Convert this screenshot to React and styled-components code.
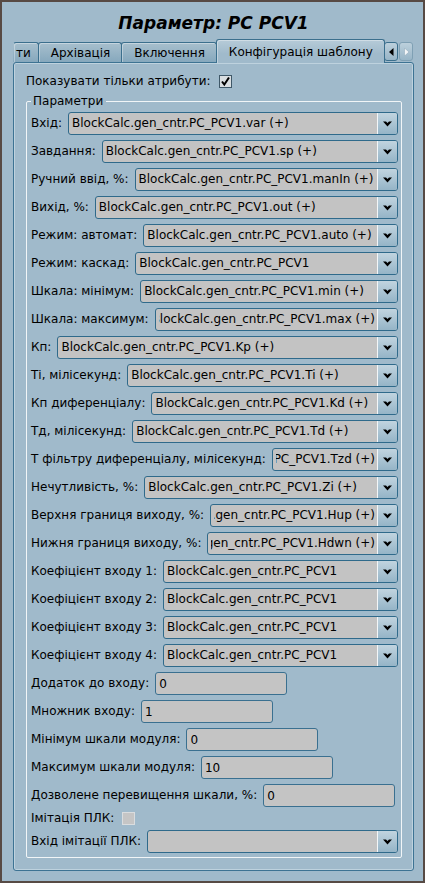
import React from "react";
import styled, { createGlobalStyle } from "styled-components";

const GlobalStyle = createGlobalStyle`
  html, body { margin: 0; padding: 0; background: #574a44; }
  * { box-sizing: border-box; }
`;

const BG = "#a0bacb";

const Window = styled.div`
  width: 425px;
  height: 883px;
  border: 2px solid #574a44;
  background: ${BG};
  display: flex;
  flex-direction: column;
  padding: 0 9px 10px 11px;
  font-family: "DejaVu Sans", "Noto Sans", sans-serif;
  font-size: 12px;
  color: #000;
`;

const Title = styled.h1`
  margin: 0;
  height: 37px;
  padding-top: 11px;
  text-align: center;
  font-size: 17px;
  line-height: 20px;
  font-weight: bold;
  font-style: italic;
`;

const TabBar = styled.div`
  height: 23px;
  display: flex;
  align-items: flex-end;
`;

const Tabs = styled.div`
  display: flex;
  align-items: flex-end;
  flex: 1;
  min-width: 0;
`;

const Tab = styled.div`
  position: relative;
  height: ${(p) => (p.$active ? "24px" : "20px")};
  margin-bottom: ${(p) => (p.$active ? "-1px" : "0")};
  margin-left: ${(p) => (p.$first ? "0" : "-1px")};
  z-index: ${(p) => (p.$active ? 2 : 1)};
  padding: ${(p) => (p.$first ? "0 7px 0 2px" : "0 11px 0 12px")};
  display: flex;
  align-items: center;
  white-space: nowrap;
  border: 1px solid #3b6f8d;
  border-left-color: ${(p) => (p.$first ? "transparent" : "#3b6f8d")};
  border-bottom: none;
  border-radius: 3px 3px 0 0;
  background: ${(p) =>
    p.$active
      ? `linear-gradient(#b6cbd8, ${BG} 60%)`
      : "linear-gradient(#a7bfcd, #86a8bd)"};
  box-shadow: inset 1px 1px 0 rgba(255, 255, 255, 0.35);
`;

const ScrollButtons = styled.div`
  display: flex;
  gap: 1px;
  height: 20px;
  flex-shrink: 0;
  margin-right: 1px;
`;

const ScrollBtn = styled.div`
  width: 14px;
  height: 19px;
  border: 1px solid ${(p) => (p.$disabled ? "#7fa0b4" : "#3b6f8d")};
  border-radius: 3px;
  background: linear-gradient(#bcd0dc, #98b5c7);
  display: flex;
  align-items: center;
  justify-content: center;
`;

const Pane = styled.div`
  flex: 1;
  border: 1px solid #3d7393;
  border-radius: 3px;
  box-shadow: inset 0 0 0 1px #bed2de;
  padding: 11px 11px 0 12px;
  display: flex;
  flex-direction: column;
`;

const CheckRow = styled.div`
  display: flex;
  align-items: center;
  gap: 8px;
  height: ${(p) => (p.$compact ? "13px" : "15px")};
  line-height: 15px;
`;

const CheckBox = styled.span`
  width: 13px;
  height: 13px;
  flex-shrink: 0;
  display: flex;
  align-items: center;
  justify-content: center;
  border: 1px solid ${(p) => (p.$checked ? "#3f5868" : "#dadddf")};
  background: ${(p) => (p.$checked ? "#d9dee1" : "#c5c5c5")};
`;

const Group = styled.fieldset`
  margin: 5px 0 0 0;
  padding: 3px 3px 4px 4px;
  border: 1px solid #f1f5f7;
  border-radius: 2px;
  min-width: 0;
`;

const Legend = styled.legend`
  padding: 0 3px 0 2px;
  line-height: 15px;
  font-size: 12px;
`;

const Rows = styled.div`
  display: flex;
  flex-direction: column;
  gap: 5px;
`;

const Row = styled.div`
  display: flex;
  align-items: center;
  gap: 6px;
  height: 23px;
`;

const Label = styled.span`
  white-space: nowrap;
  flex-shrink: 0;
  line-height: 15px;
`;

const Combo = styled.div`
  flex: 1;
  min-width: 0;
  height: 23px;
  border: 1px solid #2f6a8b;
  border-radius: 3px;
  background: #c3c3c3;
  display: flex;
  overflow: hidden;
`;

const ComboText = styled.div`
  flex: 1;
  min-width: 0;
  overflow: hidden;
  display: flex;
  justify-content: flex-end;
  margin: 0 2px 0 3px;
  line-height: 21px;
`;

const ComboValue = styled.span`
  flex-shrink: 0;
  min-width: 100%;
  white-space: pre;
`;

const DropButton = styled.div`
  width: 20px;
  flex-shrink: 0;
  border-left: 1px solid #f3f6f8;
  background: linear-gradient(#c1d4df, #95b4c7);
  display: flex;
  align-items: center;
  justify-content: center;
`;

const Field = styled.input`
  width: 132px;
  height: 23px;
  flex-shrink: 0;
  border: 1px solid #3a7090;
  border-radius: 3px;
  background: #c4c4c4;
  padding: 0 3px;
  font-family: "DejaVu Sans", "Noto Sans", sans-serif;
  font-size: 12px;
  color: #000;
  outline: none;
`;

const Chevron = () => (
  <svg width="9" height="6" viewBox="0 0 9 6">
    <path d="M0 0.5 H3 L4.5 2 L6 0.5 H9 L4.5 5.5 Z" fill="#000" />
  </svg>
);

const ComboBox = ({ value }) => (
  <Combo>
    <ComboText>
      <ComboValue>{value}</ComboValue>
    </ComboText>
    <DropButton>
      <Chevron />
    </DropButton>
  </Combo>
);

const P = "BlockCalc.gen_cntr.PC_PCV1";

const combos = [
  ["Вхід:", `${P}.var (+)`],
  ["Завдання:", `${P}.sp (+)`],
  ["Ручний ввід, %:", `${P}.manIn (+)`],
  ["Вихід, %:", `${P}.out (+)`],
  ["Режим: автомат:", `${P}.auto (+)`],
  ["Режим: каскад:", P],
  ["Шкала: мінімум:", `${P}.min (+)`],
  ["Шкала: максимум:", `${P}.max (+)`],
  ["Кп:", `${P}.Kp (+)`],
  ["Ті, мілісекунд:", `${P}.Ti (+)`],
  ["Кп диференціалу:", `${P}.Kd (+)`],
  ["Тд, мілісекунд:", `${P}.Td (+)`],
  ["Т фільтру диференціалу, мілісекунд:", `${P}.Tzd (+)`],
  ["Нечутливість, %:", `${P}.Zi (+)`],
  ["Верхня границя виходу, %:", `${P}.Hup (+)`],
  ["Нижня границя виходу, %:", `${P}.Hdwn (+)`],
  ["Коефіцієнт входу 1:", P],
  ["Коефіцієнт входу 2:", P],
  ["Коефіцієнт входу 3:", P],
  ["Коефіцієнт входу 4:", P],
];

const fields = [
  ["Додаток до входу:", "0"],
  ["Множник входу:", "1"],
  ["Мінімум шкали модуля:", "0"],
  ["Максимум шкали модуля:", "10"],
  ["Дозволене перевищення шкали, %:", "0"],
];

export default function App() {
  return (
    <>
      <GlobalStyle />
      <Window>
        <Title>Параметр: PC PCV1</Title>
        <TabBar>
          <Tabs>
            <Tab $first>ти</Tab>
            <Tab>Архівація</Tab>
            <Tab>Включення</Tab>
            <Tab $active>Конфігурація шаблону</Tab>
          </Tabs>
          <ScrollButtons>
            <ScrollBtn>
              <svg width="5" height="8" viewBox="0 0 5 8">
                <path d="M4.5 0 V8 L0 4 Z" fill="#000" />
              </svg>
            </ScrollBtn>
            <ScrollBtn $disabled>
              <svg width="5" height="8" viewBox="0 0 5 8">
                <path d="M0.5 0 V8 L5 4 Z" fill="#f4f6f8" stroke="#8aa5b6" strokeWidth="0.5" />
              </svg>
            </ScrollBtn>
          </ScrollButtons>
        </TabBar>
        <Pane>
          <CheckRow>
            <Label>Показувати тільки атрибути:</Label>
            <CheckBox $checked>
              <svg width="11" height="11" viewBox="0 0 11 11">
                <path d="M2 5.5 L4.3 8.5 L9 1.5" stroke="#000" strokeWidth="2" fill="none" />
              </svg>
            </CheckBox>
          </CheckRow>
          <Group>
            <Legend>Параметри</Legend>
            <Rows>
              {combos.map(([label, value]) => (
                <Row key={label}>
                  <Label>{label}</Label>
                  <ComboBox value={value} />
                </Row>
              ))}
              {fields.map(([label, value]) => (
                <Row key={label}>
                  <Label>{label}</Label>
                  <Field readOnly defaultValue={value} />
                </Row>
              ))}
              <CheckRow $compact>
                <Label>Імітація ПЛК:</Label>
                <CheckBox />
              </CheckRow>
              <Row>
                <Label>Вхід імітації ПЛК:</Label>
                <ComboBox value="" />
              </Row>
            </Rows>
          </Group>
        </Pane>
      </Window>
    </>
  );
}
